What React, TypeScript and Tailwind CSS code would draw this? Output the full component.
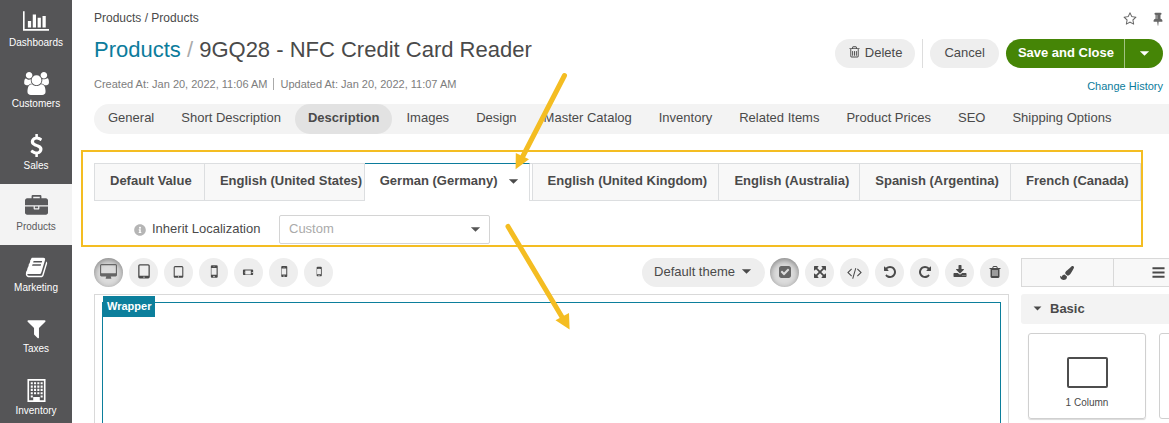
import type { ReactNode } from 'react';
import { FaInfoCircle, FaPaintBrush } from 'react-icons/fa';

const paths = {
  chart:
    'M640 768v512h-256v-512h256zM1024 256v1024h-256v-1024h256zM2048 1408v128h-2048v-1536h128v1408h1920zM1408 512v768h-256v-768h256zM1792 384v896h-256v-896h256z',
  users:
    'M593 896q-162 5-265 128h-134q-82 0-138-40.5t-56-118.5q0-353 124-353 6 0 43.5 21t97.5 42.5 119 21.5q67 0 133-23-5 37-5 66 0 159 93 287zM1664 1533q0 120-73 189.5t-194 69.5h-874q-121 0-194-69.5t-73-189.5q0-53 3.5-103.5t14-109 26.5-108.5 43-97.5 62-81 85.5-53.5 111.5-20q10 0 43 21.5t73 48 107 48 135 21.5 135-21.5 107-48 73-48 43-21.5q61 0 111.5 20t85.5 53.5 62 81 43 97.5 26.5 108.5 14 109 3.5 103.5zM640 256q0 106-75 181t-181 75-181-75-75-181 75-181 181-75 181 75 75 181zM1344 640q0 159-112.5 271.5t-271.5 112.5-271.5-112.5-112.5-271.5 112.5-271.5 271.5-112.5 271.5 112.5 112.5 271.5zM1920 865q0 78-56 118.5t-138 40.5h-134q-103-123-265-128 93-128 93-287 0-29-5-66 66 23 133 23 59 0 119-21.5t97.5-42.5 43.5-21q124 0 124 353zM1792 256q0 106-75 181t-181 75-181-75-75-181 75-181 181-75 181 75 75 181z',
  dollar:
    'M1362 1185q0 153-99.5 263.5t-258.5 136.5v175q0 14-9 23t-23 9h-135q-13 0-22.5-9.5t-9.5-22.5v-175q-66-9-127.5-31t-101.5-44.5-74-48-46.5-37.5-17.5-18q-17-21-2-41l103-135q7-10 23-12 15-2 24 9l2 2q113 99 243 125 37 8 74 8 81 0 142.5-43t61.5-122q0-28-15-53t-33.5-42-58.5-37.5-66-32-80-32.5q-39-16-61.5-25t-61.5-26.5-62.5-31-56.5-35.5-53.5-42.5-43.5-49-35.5-58-21-66.5-8.5-78q0-138 98-242t255-134v-180q0-13 9.5-22.5t22.5-9.5h135q14 0 23 9t9 23v176q57 6 110.5 23t87 33.5 63.5 37.5 39 29 15 14q17 18 5 38l-81 146q-8 15-23 16-14 3-27-7-3-3-14.5-12t-39-26.5-58.5-32-74.5-26-85.5-11.5q-95 0-155 43t-60 111q0 26 8.5 48t29.5 41.5 39.5 33 56 31 60.5 27 70 27.5q53 20 81 31.5t76 35 75.5 42.5 62 50 53 63.5 31.5 76.5 13 94z',
  briefcase:
    'M640 256h512v-128h-512v128zM1792 896v480q0 66-47 113t-113 47h-1472q-66 0-113-47t-47-113v-480h672v160q0 26 19 45t45 19h320q26 0 45-19t19-45v-160h672zM1024 896v128h-256v-128h256zM1792 416v384h-1792v-384q0-66 47-113t113-47h352v-160q0-40 28-68t68-28h576q40 0 68 28t28 68v160h352q66 0 113 47t47 113z',
  book: 'M1703 478q40 57 18 129l-275 906q-19 64-76.5 107.5t-122.5 43.5h-923q-77 0-148.5-53.5t-99.5-131.5q-24-67-2-127 0-4 3-27t4-37q1-8-3-21.5t-3-19.5q2-11 8-21t16.5-23.5 16.5-23.5q23-38 45-91.5t30-91.5q3-10 .5-30t-.5-28q3-11 17-28t17-23q21-36 42-92t25-90q1-9-2.5-32t.5-28q4-13 22-30.5t22-22.5q19-26 42.5-84.5t27.5-96.5q1-8-3-25.5t-2-26.5q2-8 9-18t18-23 17-21q8-12 16.5-30.5t15-35 16-36 19.5-32 26.5-23.5 36-11.5 47.5 5.5l-1 3q38-9 51-9h761q74 0 114 56t18 130l-274 906q-36 119-71.5 153.5t-128.5 34.5h-869q-27 0-38 15-11 16-1 43 24 70 144 70h923q29 0 56-15.5t35-41.5l300-987q7-22 5-57 38 15 59 43zM639 480q-4 13 2 22.5t20 9.5h608q13 0 25.5-9.5t16.5-22.5l21-64q4-13-2-22.5t-20-9.5h-608q-13 0-25.5 9.5t-16.5 22.5zM556 736q-4 13 2 22.5t20 9.5h608q13 0 25.5-9.5t16.5-22.5l21-64q4-13-2-22.5t-20-9.5h-608q-13 0-25.5 9.5t-16.5 22.5z',
  filter:
    'M1595 295q17 41-14 70l-493 493v742q0 42-39 59-13 5-25 5-27 0-45-19l-256-256q-19-19-19-45v-486l-493-493q-31-29-14-70 17-39 59-39h1280q42 0 59 39z',
  building:
    'M192 0h1408v1792H192zM320 128v1536h320v-256h512v256h320V128zM448 256h160v160H448zM704 256h160v160H704zM960 256h160v160H960zM1216 256h160v160H1216zM448 512h160v160H448zM704 512h160v160H704zM960 512h160v160H960zM1216 512h160v160H1216zM448 768h160v160H448zM704 768h160v160H704zM960 768h160v160H960zM1216 768h160v160H1216zM448 1024h160v160H448zM704 1024h160v160H704zM960 1024h160v160H960zM1216 1024h160v160H1216zM448 1280h160v160H448zM1216 1280h160v160H1216z',
  tablet:
    'M960 1408q0-26-19-45t-45-19-45 19-19 45 19 45 45 19 45-19 19-45zM1344 1248v-960q0-13-9.5-22.5t-22.5-9.5h-832q-13 0-22.5 9.5t-9.5 22.5v960q0 13 9.5 22.5t22.5 9.5h832q13 0 22.5-9.5t9.5-22.5zM1472 288v1088q0 66-47 113t-113 47h-832q-66 0-113-47t-47-113v-1088q0-66 47-113t113-47h832q66 0 113 47t47 113z',
  mobile:
    'M976 1408q0-33-23.5-56.5t-56.5-23.5-56.5 23.5-23.5 56.5 23.5 56.5 56.5 23.5 56.5-23.5 23.5-56.5zM1184 1184v-704q0-13-9.5-22.5t-22.5-9.5h-512q-13 0-22.5 9.5t-9.5 22.5v704q0 13 9.5 22.5t22.5 9.5h512q13 0 22.5-9.5t9.5-22.5zM1008 304q0-16-16-16h-192q-16 0-16 16t16 16h192q16 0 16-16zM1312 256v1152q0 52-38 90t-90 38h-512q-52 0-90-38t-38-90v-1152q0-52 38-90t90-38h512q52 0 90 38t38 90z',
  desktop:
    'M1792 992v-832q0-13-9.5-22.5t-22.5-9.5h-1600q-13 0-22.5 9.5t-9.5 22.5v832q0 13 9.5 22.5t22.5 9.5h1600q13 0 22.5-9.5t9.5-22.5zM1920 160v1088q0 66-47 113t-113 47h-544q0 37 16 77.5t32 71 16 43.5q0 26-19 45t-45 19h-512q-26 0-45-19t-19-45q0-14 16-44t32-70 16-78h-544q-66 0-113-47t-47-113v-1088q0-66 47-113t113-47h1600q66 0 113 47t47 113z',
  trashOutline:
    'M704 736v576q0 14-9 23t-23 9h-64q-14 0-23-9t-9-23v-576q0-14 9-23t23-9h64q14 0 23 9t9 23zM960 736v576q0 14-9 23t-23 9h-64q-14 0-23-9t-9-23v-576q0-14 9-23t23-9h64q14 0 23 9t9 23zM1216 736v576q0 14-9 23t-23 9h-64q-14 0-23-9t-9-23v-576q0-14 9-23t23-9h64q14 0 23 9t9 23zM1344 1376v-948h-896v948q0 22 7 40.5t14.5 27 10.5 8.5h832q3 0 10.5-8.5t14.5-27 7-40.5zM672 300h448l-48-117q-7-9-17-11h-317q-10 2-17 11zM1600 332v64q0 14-9 23t-23 9h-96v948q0 83-47 143.5t-113 60.5h-832q-66 0-113-58.5t-47-141.5v-952h-96q-14 0-23-9t-9-23v-64q0-14 9-23t23-9h309l70-167q15-37 54-63t79-26h320q40 0 79 26t54 63l70 167h309q14 0 23 9t9 23z',
  trash:
    'M704 1376v-704q0-14-9-23t-23-9h-64q-14 0-23 9t-9 23v704q0 14 9 23t23 9h64q14 0 23-9t9-23zM960 1376v-704q0-14-9-23t-23-9h-64q-14 0-23 9t-9 23v704q0 14 9 23t23 9h64q14 0 23-9t9-23zM1216 1376v-704q0-14-9-23t-23-9h-64q-14 0-23 9t-9 23v704q0 14 9 23t23 9h64q14 0 23-9t9-23zM672 384h448l-48-117q-7-9-17-11h-317q-10 2-17 11zM1600 416v64q0 14-9 23t-23 9h-96v948q0 83-47 143.5t-113 60.5h-832q-66 0-113-58.5t-47-141.5v-952h-96q-14 0-23-9t-9-23v-64q0-14 9-23t23-9h309l70-167q15-37 54-63t79-26h320q40 0 79 26t54 63l70 167h309q14 0 23 9t9 23z',
  star: 'M1201 1004l306-297-422-62-189-382-189 382-422 62 306 297-73 421 378-199 377 199zM1728 647q0 22-26 48l-363 354 86 500q1 7 1 20 0 50-41 50-19 0-40-12l-449-236-449 236q-22 12-40 12-21 0-31.5-14.5t-10.5-35.5q0-6 2-20l86-500-364-354q-25-27-25-48 0-37 56-46l502-73 225-455q19-41 49-41t49 41l225 455 502 73q56 9 56 46z',
  pin: 'M800 864v-448q0-14-9-23t-23-9-23 9-9 23v448q0 14 9 23t23 9 23-9 9-23zM1472 1184q0 26-19 45t-45 19h-429l-51 483q-2 12-10.5 20.5t-20.5 8.5h-1q-27 0-32-27l-76-485h-404q-26 0-45-19t-19-45q0-123 78.5-221.5t177.5-98.5v-512q-52 0-90-38t-38-90 38-90 90-38h640q52 0 90 38t38 90-38 90-90 38v512q99 0 177.5 98.5t78.5 221.5z',
  check:
    'M813 1299l614-614q19-19 19-45t-19-45l-102-102q-19-19-45-19t-45 19l-467 467-211-211q-19-19-45-19t-45 19l-102 102q-19 19-19 45t19 45l358 358q19 19 45 19t45-19zM1664 416v960q0 119-84.5 203.5t-203.5 84.5h-960q-119 0-203.5-84.5t-84.5-203.5v-960q0-119 84.5-203.5t203.5-84.5h960q119 0 203.5 84.5t84.5 203.5z',
  expand:
    'M1411 541l-355 355 355 355 144-144q29-31 70-14 39 17 39 59v448q0 26-19 45t-45 19h-448q-42 0-59-40-17-39 14-69l144-144-355-355-355 355 144 144q31 30 14 69-17 40-59 40h-448q-26 0-45-19t-19-45v-448q0-42 40-59 39-17 69 14l144 144 355-355-355-355-144 144q-19 19-45 19-12 0-24-5-40-17-40-59v-448q0-26 19-45t45-19h448q42 0 59 40 17 39-14 69l-144 144 355 355 355-355-144-144q-31-30-14-69 17-40 59-40h448q26 0 45 19t19 45v448q0 42-39 59-13 5-25 5-26 0-45-19z',
  code: 'M617 1399l-50 50q-10 10-23 10t-23-10l-466-466q-10-10-10-23t10-23l466-466q10-10 23-10t23 10l50 50q10 10 10 23t-10 23l-393 393 393 393q10 10 10 23t-10 23zM1176 454l-373 1291q-4 13-15.5 19.5t-23.5 2.5l-62-17q-13-4-19.5-15.5t-2.5-24.5l373-1291q4-13 15.5-19.5t23.5-2.5l62 17q13 4 19.5 15.5t2.5 24.5zM1865 983l-466 466q-10 10-23 10t-23-10l-50-50q-10-10-10-23t10-23l393-393-393-393q-10-10-10-23t10-23l50-50q10-10 23-10t23 10l466 466q10 10 10 23t-10 23z',
  undo: 'M1664 896q0 156-61 298t-164 245-245 164-298 61q-172 0-327-72.5t-264-204.5q-7-10-6.5-22.5t8.5-20.5l137-138q10-9 25-9 16 2 23 12 73 95 179 147t225 52q104 0 198.5-40.5t163.5-109.5 109.5-163.5 40.5-198.5-40.5-198.5-109.5-163.5-163.5-109.5-198.5-40.5q-98 0-188 35.5t-160 101.5l137 138q31 30 14 69-17 40-59 40h-448q-26 0-45-19t-19-45v-448q0-42 40-59 39-17 69 14l130 129q107-101 244.5-156.5t284.5-55.5q156 0 298 61t245 164 164 245 61 298z',
  download:
    'M1344 1344q0-26-19-45t-45-19-45 19-19 45 19 45 45 19 45-19 19-45zM1600 1344q0-26-19-45t-45-19-45 19-19 45 19 45 45 19 45-19 19-45zM1728 1120v320q0 40-28 68t-68 28h-1472q-40 0-68-28t-28-68v-320q0-40 28-68t68-28h465l135 136q58 56 136 56t136-56l136-136h464q40 0 68 28t28 68zM1403 551q17 41-14 70l-448 448q-18 19-45 19t-45-19l-448-448q-31-29-14-70 17-39 59-39h256v-448q0-26 19-45t45-19h256q26 0 45 19t19 45v448h256q42 0 59 39z',
  bars: 'M64 176h1664v288H64zM64 752h1664v288H64zM64 1328h1664v288H64z',
  caret: 'M256 576h1280l-640 640z',
};

type IconName = keyof typeof paths;

function Icon({ name, className, box = 1792 }: { name: IconName; className: string; box?: number }) {
  return (
    <svg viewBox={`0 0 ${box} 1792`} className={`shrink-0 ${className}`} fill="currentColor" fillRule="evenodd" aria-hidden="true">
      <path d={paths[name]} />
    </svg>
  );
}

const menu: { label: string; icon: IconName; box?: number; size: string }[] = [
  { label: 'Dashboards', icon: 'chart', box: 2048, size: 'w-[26px] h-[23px]' },
  { label: 'Customers', icon: 'users', box: 1920, size: 'w-[25px] h-[23px]' },
  { label: 'Sales', icon: 'dollar', size: 'w-[23px] h-[23px]' },
  { label: 'Products', icon: 'briefcase', size: 'w-[23px] h-[23px]' },
  { label: 'Marketing', icon: 'book', size: 'w-[23px] h-[23px]' },
  { label: 'Taxes', icon: 'filter', size: 'w-[23px] h-[23px]' },
  { label: 'Inventory', icon: 'building', size: 'w-[23px] h-[23px]' },
];

function Sidebar() {
  return (
    <nav aria-label="Main" className="grid h-[429px] w-[72px] shrink-0 grid-rows-7 bg-[#555557]">
      {menu.map((item) => (
        <a
          key={item.label}
          href="#"
          className={`flex flex-col items-center gap-[3px] pt-[11px] text-[10px] leading-3 ${
            item.label === 'Products' ? 'bg-[#f3f3f3] text-[#5a5a5c]' : 'text-white'
          }`}
        >
          <Icon name={item.icon} box={item.box} className={item.size} />
          {item.label}
        </a>
      ))}
    </nav>
  );
}

function Header() {
  return (
    <header className="flex shrink-0 justify-between pr-[6px] pl-[22px]">
      <div className="pt-[10px]">
        <p className="text-xs leading-4">Products / Products</p>
        <h1 className="mt-[10px] text-[22px] leading-7">
          <a href="#" className="text-[#0c7c9c]">
            Products
          </a>
          <span className="text-[#aaa]"> / </span>9GQ28 - NFC Credit Card Reader
        </h1>
        <p className="mt-[12px] flex text-[11px] leading-4 text-[#7d7d7d]">
          <span>Created At: Jan 20, 2022, 11:06 AM</span>
          <span className="my-[2px] ml-[6px] border-l border-[#aaa] pl-[6px] leading-3">Updated At: Jan 20, 2022, 11:07 AM</span>
        </p>
      </div>
      <div className="flex flex-col items-end pt-3">
        <div className="flex gap-[14px] text-[#666]">
          <button aria-label="Favorite">
            <Icon name="star" className="h-[14px] w-[14px]" />
          </button>
          <button aria-label="Pin">
            <Icon name="pin" className="h-[14px] w-[12px]" box={1536} />
          </button>
        </div>
        <div className="mt-[13px] flex h-[29px] text-[13px]">
          <button className="flex items-center gap-1 rounded-full bg-[#eee] px-[13px] pb-[2px]">
            <Icon name="trashOutline" className="h-[13px] w-[13px]" />
            Delete
          </button>
          <span className="mx-[7px] w-px bg-[#ddd]" />
          <button className="rounded-full bg-[#eee] px-[14px] pb-[2px]">Cancel</button>
          <button className="ml-[7px] rounded-l-full bg-[#458506] pr-[10px] pl-3 pb-[2px] font-bold text-white">Save and Close</button>
          <button aria-label="More save options" className="flex w-[39px] items-center justify-center rounded-r-full border-l border-[#a2c283] bg-[#458506] text-white">
            <Icon name="caret" className="h-[13px] w-[13px]" />
          </button>
        </div>
        <a href="#" className="mt-[10px] text-[11px] leading-4 text-[#0c7c9c]">
          Change History
        </a>
      </div>
    </header>
  );
}

const sections = [
  'General',
  'Short Description',
  'Description',
  'Images',
  'Design',
  'Master Catalog',
  'Inventory',
  'Related Items',
  'Product Prices',
  'SEO',
  'Shipping Options',
];

const locales = [
  'Default Value',
  'English (United States)',
  'German (Germany)',
  'English (United Kingdom)',
  'English (Australia)',
  'Spanish (Argentina)',
  'French (Canada)',
];

function Localization() {
  return (
    <section className="mt-4 mr-[26px] ml-[9px] border-2 border-[#f4bd22] pt-[11px] pb-px pl-[11px]">
      <div
        role="tablist"
        className="grid h-[38px] grid-cols-[110fr_160fr_168fr_187fr_141fr_151fr_130fr] border-l border-[#dcdee0] text-[13px] font-bold"
      >
        {locales.map((name) =>
          name === 'German (Germany)' ? (
            <div key={name} className="flex border-b border-[#dcdee0]">
              <button role="tab" aria-selected="true" className="-mb-px flex flex-1 items-center gap-[9px] border-t border-r border-t-[#0c7c9c] border-r-[#dcdee0] bg-white pb-[3px] pl-[15px] whitespace-nowrap">
                {name}
                <Icon name="caret" className="h-[13px] w-[13px]" />
              </button>
              <span className="w-[3px] border-t border-r border-[#dcdee0]" />
            </div>
          ) : (
            <button
              key={name}
              role="tab"
              aria-selected="false"
              className="border-y border-r border-[#dcdee0] bg-[#f8f8f8] pb-[2px] pl-[15px] text-left whitespace-nowrap"
            >
              {name}
            </button>
          ),
        )}
      </div>
      <div className="mt-[14px] flex items-center pl-[40px] text-[13px]">
        <FaInfoCircle className="h-[12px] w-[12px] text-[#b5b5b5]" />
        <label htmlFor="inherit" className="ml-[6px] w-[127px] pb-px">
          Inherit Localization
        </label>
        <div className="relative w-[211px]">
          <select id="inherit" className="block h-[29px] w-full appearance-none rounded-[2px] border border-[#d4d4d4] bg-white pb-px pl-[9px] text-[#aaa]">
            <option>Custom</option>
          </select>
          <Icon name="caret" className="pointer-events-none absolute top-[8px] right-[8px] h-[13px] w-[13px] text-[#555]" />
        </div>
      </div>
    </section>
  );
}

function Round({ label, pressed, children }: { label: string; pressed?: boolean; children: ReactNode }) {
  return (
    <button
      aria-label={label}
      aria-pressed={pressed}
      className={`flex h-[29px] w-[29px] shrink-0 items-center justify-center rounded-full pb-px ${
        pressed ? 'bg-[#dcdcdc] text-[#666] shadow-[inset_0_2px_6px_rgba(0,0,0,0.4)]' : 'bg-[#eee]'
      }`}
    >
      {children}
    </button>
  );
}

function Editor() {
  return (
    <div className="flex min-w-0 flex-1 flex-col">
      <div className="flex h-[29px] gap-[6px]">
        <Round label="Desktop" pressed>
          <Icon name="desktop" box={1920} className="h-[16px] w-[17px]" />
        </Round>
        <Round label="Tablet">
          <Icon name="tablet" className="h-[18px] w-[18px]" />
        </Round>
        <Round label="Small tablet">
          <Icon name="tablet" className="h-[15px] w-[15px]" />
        </Round>
        <Round label="Large phone">
          <Icon name="mobile" className="h-[16px] w-[16px]" />
        </Round>
        <Round label="Phone landscape">
          <Icon name="mobile" className="h-[13px] w-[13px] -rotate-90" />
        </Round>
        <Round label="Phone">
          <Icon name="mobile" className="h-[14px] w-[14px]" />
        </Round>
        <Round label="Small phone">
          <Icon name="mobile" className="h-[12px] w-[12px]" />
        </Round>
        <button className="mr-[-1px] ml-auto flex items-center gap-[5px] rounded-full bg-[#eee] px-3 pb-[2px] text-[13px] whitespace-nowrap">
          Default theme
          <Icon name="caret" className="h-[13px] w-[13px]" />
        </button>
        <Round label="View components" pressed>
          <Icon name="check" className="h-[14px] w-[14px]" />
        </Round>
        <Round label="Fullscreen">
          <Icon name="expand" className="h-[14px] w-[14px]" />
        </Round>
        <Round label="View code">
          <Icon name="code" box={1920} className="h-[14px] w-[15px]" />
        </Round>
        <Round label="Undo">
          <Icon name="undo" className="h-[14px] w-[14px]" />
        </Round>
        <Round label="Redo">
          <Icon name="undo" className="h-[14px] w-[14px] -scale-x-100" />
        </Round>
        <Round label="Import">
          <Icon name="download" className="h-[14px] w-[14px]" />
        </Round>
        <Round label="Clear canvas">
          <Icon name="trash" className="h-[14px] w-[14px]" />
        </Round>
      </div>
      <div className="mt-[7px] flex min-h-[140px] flex-1 border border-b-0 border-[#d9d9d9] px-[7px] pt-[7px]">
        <div className="relative flex-1 border border-b-0 border-[#0c7f9c]">
          <span className="absolute -top-[7px] left-0 bg-[#0c7f9c] px-1 text-[11px] leading-[21px] font-bold text-white">Wrapper</span>
        </div>
      </div>
    </div>
  );
}

function Blocks() {
  return (
    <aside className="w-[148px] shrink-0 overflow-hidden">
      <div className="w-[277px]">
        <div className="grid h-[29px] grid-cols-3 border border-[#d9d9d9] bg-[#f8f8f8]">
          <button aria-label="Styles" className="flex items-center justify-center border-r border-[#d9d9d9]">
            <FaPaintBrush className="h-[14px] w-[14px]" />
          </button>
          <button aria-label="Layers" className="flex items-center justify-center border-r border-[#d9d9d9]">
            <Icon name="bars" className="h-[13px] w-[13px]" />
          </button>
        </div>
        <button className="mt-[7px] flex h-[30px] w-full items-center gap-[7px] rounded-[3px] bg-[#f3f3f3] pb-px pl-[11px] text-[13px] font-bold">
          <Icon name="caret" className="h-[11px] w-[11px]" />
          Basic
        </button>
        <div className="flex gap-[13px] pt-[9px] pl-[7px]">
          <button className="flex h-[86px] w-[118px] flex-col items-center rounded-[3px] border border-[#d0d0d0] pt-[23px] text-[10px] shadow-[0_1px_1px_rgba(0,0,0,0.15)]">
            <span className="h-[31px] w-[41px] rounded-[2px] border-2 border-[#4d4d4d]" />
            <span className="mt-[8px] leading-[14px]">1 Column</span>
          </button>
          <button aria-label="2 Columns" className="h-[86px] w-[118px] rounded-[3px] border border-[#d0d0d0]" />
        </div>
      </div>
    </aside>
  );
}

function Pointers() {
  return (
    <svg viewBox="500 70 80 265" className="pointer-events-none absolute top-[70px] left-[500px] h-[265px] w-[80px]" aria-hidden="true">
      <g stroke="#f4bd22" strokeWidth="5" strokeLinecap="round">
        <path d="M564.5 75.5L523 156" />
        <path d="M508 226.5L562 317" />
      </g>
      <path d="M515.8 153L529 159.3L515.6 169.3zM569 313L555.5 320.3L569.6 329.4z" fill="#f4bd22" />
    </svg>
  );
}

export default function App() {
  return (
    <div className="relative flex h-screen overflow-hidden bg-white font-['Liberation_Sans',Arial,sans-serif] text-[#4a4a4a]">
      <Sidebar />
      <main className="flex min-w-0 flex-1 flex-col">
        <Header />
        <nav aria-label="Sections" className="mt-[10px] ml-[22px] flex h-[30px] shrink-0 gap-px overflow-hidden rounded-l-full bg-[#f3f3f3] pl-px text-[13px]">
          {sections.map((name) => (
            <a
              key={name}
              href="#"
              className={`rounded-full px-[13px] pt-[6px] leading-4 whitespace-nowrap ${name === 'Description' ? 'bg-[#e2e2e2] font-bold' : ''}`}
            >
              {name}
            </a>
          ))}
        </nav>
        <Localization />
        <div className="mt-[11px] flex flex-1 gap-3 pl-[22px]">
          <Editor />
          <Blocks />
        </div>
      </main>
      <Pointers />
    </div>
  );
}
